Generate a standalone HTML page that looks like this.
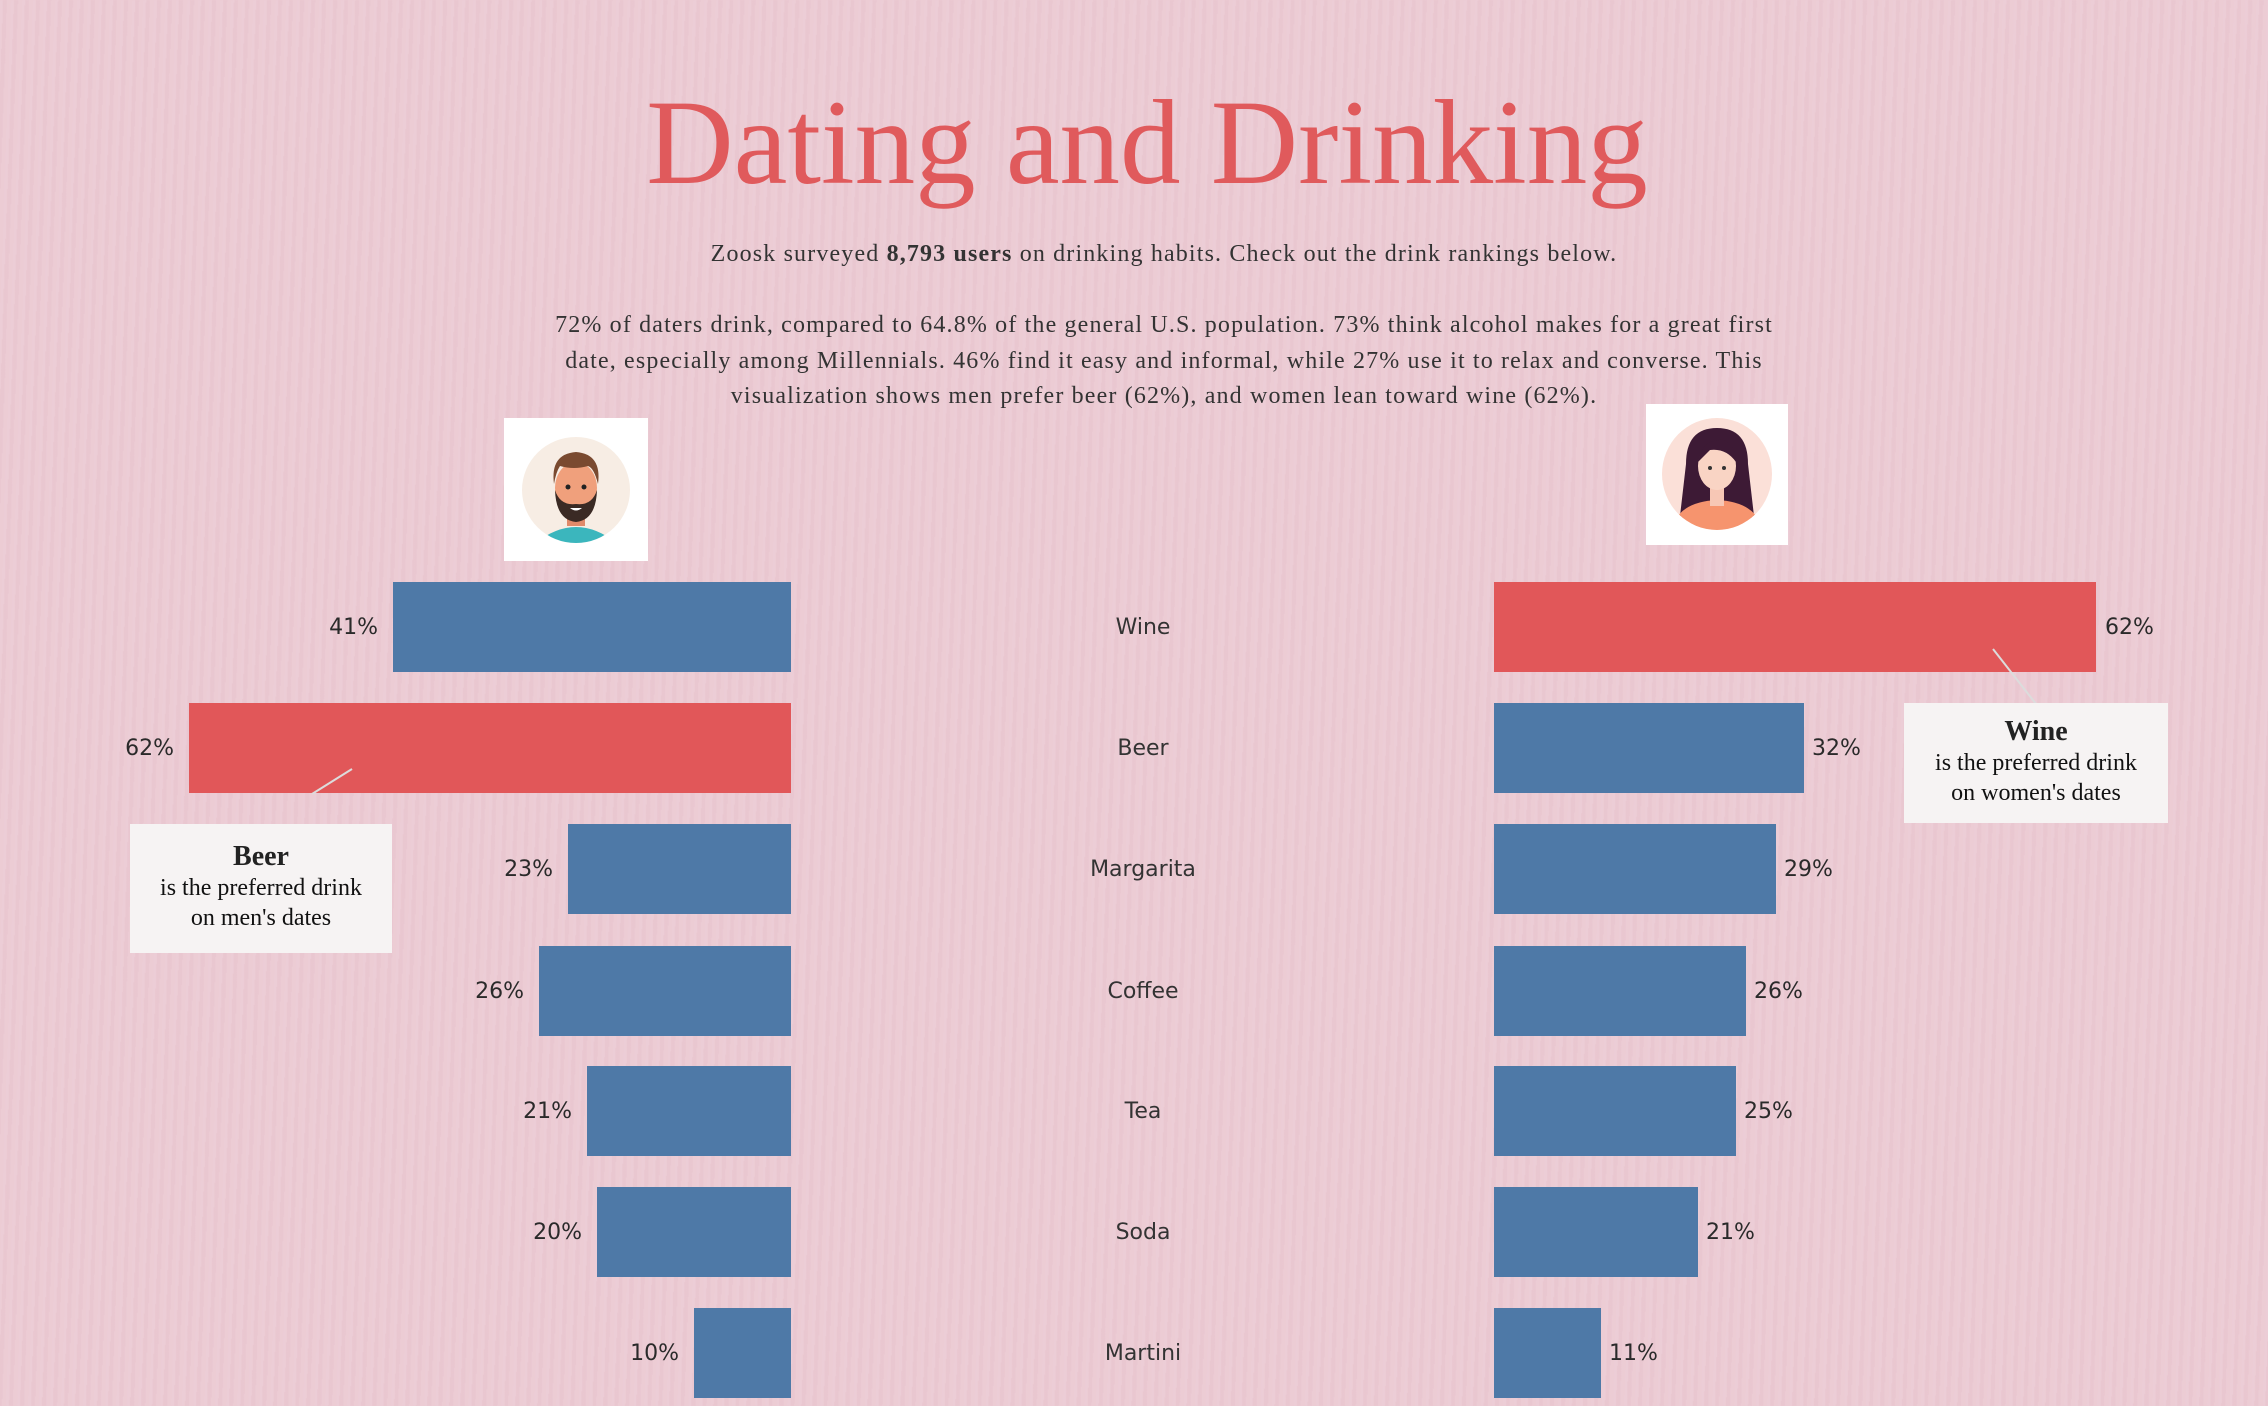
<!DOCTYPE html>
<html><head><meta charset="utf-8"><style>
html,body{margin:0;padding:0}
body{width:2268px;height:1406px;position:relative;overflow:hidden;background:#ebcad3;
background-image:repeating-linear-gradient(92deg,rgba(255,255,255,.06) 0 3px,rgba(200,140,160,.05) 3px 7px,rgba(255,255,255,.03) 7px 11px);
font-family:"Liberation Serif",serif;color:#333}
.a{position:absolute}
h1{position:absolute;left:13px;width:2268px;top:73px;margin:0;text-align:center;font-weight:normal;font-size:121px;color:#e05a5c;font-family:"Liberation Serif",serif;line-height:140px;letter-spacing:0}
.t{position:absolute;left:30px;width:2268px;text-align:center;font-size:24px;letter-spacing:1.15px;color:#333;white-space:nowrap}
.bar{position:absolute;height:90px}
.lb{position:absolute;font-family:"DejaVu Sans","Liberation Sans",sans-serif;font-size:22px;color:#2a2a2a;line-height:90px}
.cat{position:absolute;left:1043px;width:200px;text-align:center;font-family:"DejaVu Sans","Liberation Sans",sans-serif;font-size:22px;color:#333;line-height:90px}
.box{position:absolute;background:#f6f3f3;text-align:center;font-size:24px;color:#111;line-height:30px;box-sizing:border-box}
.box b{font-size:28px;color:#222}
.av{position:absolute;background:#fff}
</style></head><body>
<h1>Dating and Drinking</h1>
<div class="t" style="top:241px">Zoosk surveyed <b>8,793 users</b> on drinking habits. Check out the drink rankings below.</div>
<div class="t" style="top:308px;line-height:35.5px">72% of daters drink, compared to 64.8% of the general U.S. population. 73% think alcohol makes for a great first<br>date, especially among Millennials. 46% find it easy and informal, while 27% use it to relax and converse. This<br>visualization shows men prefer beer (62%), and women lean toward wine (62%).</div>

<div class="av" style="left:504px;top:418px;width:144px;height:143px">
<svg width="144" height="143" viewBox="0 0 144 143">
<ellipse cx="72" cy="72" rx="54" ry="53" fill="#f7ede4"/>
<clipPath id="c1"><ellipse cx="72" cy="72" rx="54" ry="53"/></clipPath>
<g clip-path="url(#c1)">
<path d="M28 128 Q72 90 116 128 L116 140 L28 140Z" fill="#3bb6bd"/>
<rect x="63" y="88" width="18" height="20" fill="#e08a6a"/>
<ellipse cx="72" cy="70" rx="21" ry="26" fill="#f0a07c"/>
<path d="M51 72 Q52 102 72 104 Q92 102 93 72 Q88 88 72 86 Q56 88 51 72Z" fill="#3a2a24"/>
<path d="M50 66 Q46 36 72 34 Q98 36 94 66 Q90 50 84 48 Q70 52 56 48 Q52 54 50 66Z" fill="#7a4a30"/>
<circle cx="64" cy="69" r="2.5" fill="#222"/><circle cx="80" cy="69" r="2.5" fill="#222"/>
<path d="M66 90 Q72 95 78 90Z" fill="#fff"/>
</g></svg></div>

<div class="av" style="left:1646px;top:404px;width:142px;height:141px">
<svg width="142" height="141" viewBox="0 0 142 141">
<ellipse cx="71" cy="70" rx="55" ry="56" fill="#fbe0d8"/>
<clipPath id="c2"><ellipse cx="71" cy="70" rx="55" ry="56"/></clipPath>
<g clip-path="url(#c2)">
<path d="M40 60 Q40 24 71 24 Q102 24 102 60 L108 112 L34 112Z" fill="#3d1a35"/>
<path d="M24 132 Q28 98 71 96 Q114 98 118 132Z" fill="#f6946e"/>
<rect x="64" y="80" width="14" height="22" fill="#f7c7b5"/>
<ellipse cx="71" cy="62" rx="19" ry="24" fill="#f9d4c4"/>
<path d="M52 58 Q56 34 78 36 Q90 42 90 58 Q80 44 64 46Z" fill="#3d1a35"/>
<circle cx="64" cy="64" r="2" fill="#333"/><circle cx="78" cy="64" r="2" fill="#333"/>
</g></svg></div>

<div class="bar" style="left:393px;width:398px;top:582px;background:#4e79a7"></div>
<div class="lb" style="right:1890px;top:583px">41%</div>
<div class="bar" style="left:189px;width:602px;top:703px;background:#e15759"></div>
<div class="lb" style="right:2094px;top:704px">62%</div>
<div class="bar" style="left:568px;width:223px;top:824px;background:#4e79a7"></div>
<div class="lb" style="right:1715px;top:825px">23%</div>
<div class="bar" style="left:539px;width:252px;top:946px;background:#4e79a7"></div>
<div class="lb" style="right:1744px;top:947px">26%</div>
<div class="bar" style="left:587px;width:204px;top:1066px;background:#4e79a7"></div>
<div class="lb" style="right:1696px;top:1067px">21%</div>
<div class="bar" style="left:597px;width:194px;top:1187px;background:#4e79a7"></div>
<div class="lb" style="right:1686px;top:1188px">20%</div>
<div class="bar" style="left:694px;width:97px;top:1308px;background:#4e79a7"></div>
<div class="lb" style="right:1589px;top:1309px">10%</div>

<div class="cat" style="top:583px">Wine</div>
<div class="cat" style="top:704px">Beer</div>
<div class="cat" style="top:825px">Margarita</div>
<div class="cat" style="top:947px">Coffee</div>
<div class="cat" style="top:1067px">Tea</div>
<div class="cat" style="top:1188px">Soda</div>
<div class="cat" style="top:1309px">Martini</div>

<div class="bar" style="left:1494px;width:602px;top:582px;background:#e15759"></div>
<div class="lb" style="left:2105px;top:583px">62%</div>
<div class="bar" style="left:1494px;width:310px;top:703px;background:#4e79a7"></div>
<div class="lb" style="left:1812px;top:704px">32%</div>
<div class="bar" style="left:1494px;width:282px;top:824px;background:#4e79a7"></div>
<div class="lb" style="left:1784px;top:825px">29%</div>
<div class="bar" style="left:1494px;width:252px;top:946px;background:#4e79a7"></div>
<div class="lb" style="left:1754px;top:947px">26%</div>
<div class="bar" style="left:1494px;width:242px;top:1066px;background:#4e79a7"></div>
<div class="lb" style="left:1744px;top:1067px">25%</div>
<div class="bar" style="left:1494px;width:204px;top:1187px;background:#4e79a7"></div>
<div class="lb" style="left:1706px;top:1188px">21%</div>
<div class="bar" style="left:1494px;width:107px;top:1308px;background:#4e79a7"></div>
<div class="lb" style="left:1609px;top:1309px">11%</div>

<svg class="a" style="left:0;top:0" width="2268" height="1406">
<line x1="352" y1="769" x2="312" y2="794" stroke="#dcdcdc" stroke-width="2"/>
<line x1="1993" y1="649" x2="2036" y2="704" stroke="#dcdcdc" stroke-width="2"/>
</svg>
<div class="box" style="left:130px;top:824px;width:262px;height:129px;padding-top:18px"><b>Beer</b><br>is the preferred drink<br>on men's dates</div>
<div class="box" style="left:1904px;top:703px;width:264px;height:120px;padding-top:14px"><b>Wine</b><br>is the preferred drink<br>on women's dates</div>
</body></html>
